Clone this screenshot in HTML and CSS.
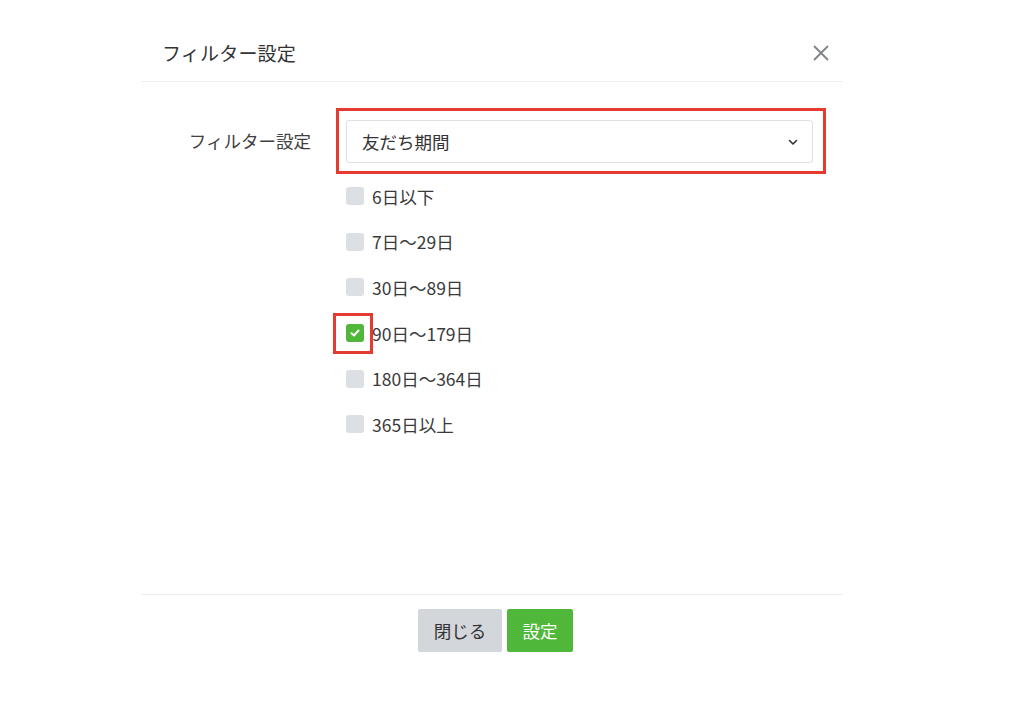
FILE: index.html
```html
<!DOCTYPE html>
<html lang="ja">
<head>
<meta charset="utf-8">
<title>フィルター設定</title>
<link rel="stylesheet" href="styles.css">
</head>
<body>
<div class="modal">
  <div class="modal-header">
    <h1 class="modal-title">フィルター設定</h1>
    <button class="close-btn" aria-label="閉じる">
      <svg width="16" height="16" viewBox="0 0 16 16"><path d="M1.5 1.5 L14.5 14.5 M14.5 1.5 L1.5 14.5" stroke="#7f8286" stroke-width="1.8" fill="none" stroke-linecap="round"/></svg>
    </button>
  </div>
  <div class="modal-body">
    <div class="form-row">
      <div class="form-label">フィルター設定</div>
      <div class="form-field">
        <div class="highlight-box">
          <div class="select">
            <span class="select-value">友だち期間</span>
            <svg class="chevron" width="10" height="7" viewBox="0 0 10 7"><path d="M1.5 1.5 L5 5 L8.5 1.5" stroke="#333" stroke-width="1.6" fill="none" stroke-linecap="round" stroke-linejoin="round"/></svg>
          </div>
        </div>
        <ul class="options">
          <li class="option"><span class="checkbox"></span><span class="option-text">6日以下</span></li>
          <li class="option"><span class="checkbox"></span><span class="option-text">7日〜29日</span></li>
          <li class="option"><span class="checkbox"></span><span class="option-text">30日〜89日</span></li>
          <li class="option"><span class="checkbox checked"><svg width="10" height="8" viewBox="0 0 10 8"><path d="M1.5 4.2 L4 6.5 L8.5 1.5" stroke="#fff" stroke-width="2" fill="none" stroke-linecap="round" stroke-linejoin="round"/></svg><span class="mark"></span></span><span class="option-text">90日〜179日</span></li>
          <li class="option"><span class="checkbox"></span><span class="option-text">180日〜364日</span></li>
          <li class="option"><span class="checkbox"></span><span class="option-text">365日以上</span></li>
        </ul>
      </div>
    </div>
  </div>
  <div class="modal-footer">
    <button class="btn btn-secondary">閉じる</button>
    <button class="btn btn-primary">設定</button>
  </div>
</div>
</body>
</html>
```
FILE: styles.css
```css
* { box-sizing: border-box; }
html, body { margin: 0; padding: 0; background: #fff; }
body {
  font-family: "Noto Sans CJK JP", "Noto Sans", sans-serif;
  color: #3a3a3a;
}
.modal {
  width: 702px;
  margin-left: 141px;
  padding-top: 26px;
}
.modal-header {
  height: 56px;
  display: flex;
  align-items: center;
  justify-content: space-between;
  padding: 0 14px 2px 21px;
  border-bottom: 1px solid #eeeff1;
}
.modal-title {
  margin: 0;
  font-size: 19px;
  font-weight: 400;
  color: #333;
  letter-spacing: 0.2px;
}
.close-btn {
  background: none;
  border: none;
  padding: 0;
  width: 16px;
  height: 16px;
  display: flex;
  cursor: pointer;
}
.modal-body {
  height: 512px;
  padding: 26px 18px 0 0;
}
.form-row {
  display: grid;
  grid-template-columns: 170px 1fr;
  column-gap: 25px;
}
.form-label {
  text-align: right;
  font-size: 17.5px;
  color: #404040;
  height: 66px;
  display: flex;
  align-items: center;
  justify-content: flex-end;
  padding-bottom: 1px;
}
.highlight-box {
  border: 3px solid #e53a2f;
  padding: 9px 10px 8px 7px;
  margin-right: -1px;
}
.select {
  height: 43px;
  border: 1px solid #dcdfe4;
  border-radius: 3px;
  display: flex;
  align-items: center;
  justify-content: space-between;
  padding: 0 14px 0 15px;
  background: #fff;
}
.select-value {
  font-size: 17.5px;
  color: #333;
}
.chevron { margin-top: 1px; }
.options {
  list-style: none;
  margin: 0;
  padding: 0 0 0 10px;
}
.option {
  height: 45.6px;
  display: flex;
  align-items: center;
  gap: 8px;
  padding-bottom: 1px;
}
.checkbox {
  position: relative;
  width: 18px;
  height: 18px;
  border-radius: 3px;
  background: #dcdfe4;
  display: flex;
  align-items: center;
  justify-content: center;
  flex-shrink: 0;
}
.checkbox.checked { background: #4fb73a; }
.checkbox .mark {
  position: absolute;
  left: -13px;
  top: -11px;
  width: 40px;
  height: 41px;
  border: 3px solid #e53a2f;
}
.option-text {
  font-size: 17.5px;
  color: #3a3a3a;
}
.modal-footer {
  border-top: 1px solid #eeeff1;
  padding: 14px 0 0 7px;
  display: flex;
  justify-content: center;
  gap: 5px;
}
.btn {
  height: 43px;
  border: none;
  border-radius: 2px;
  font-family: inherit;
  font-size: 17.5px;
  padding: 0 12px;
  cursor: pointer;
}
.btn-secondary {
  background: #d3d6da;
  color: #333;
  width: 84px;
}
.btn-primary {
  background: #4fb73a;
  color: #fff;
  width: 66px;
}
```
